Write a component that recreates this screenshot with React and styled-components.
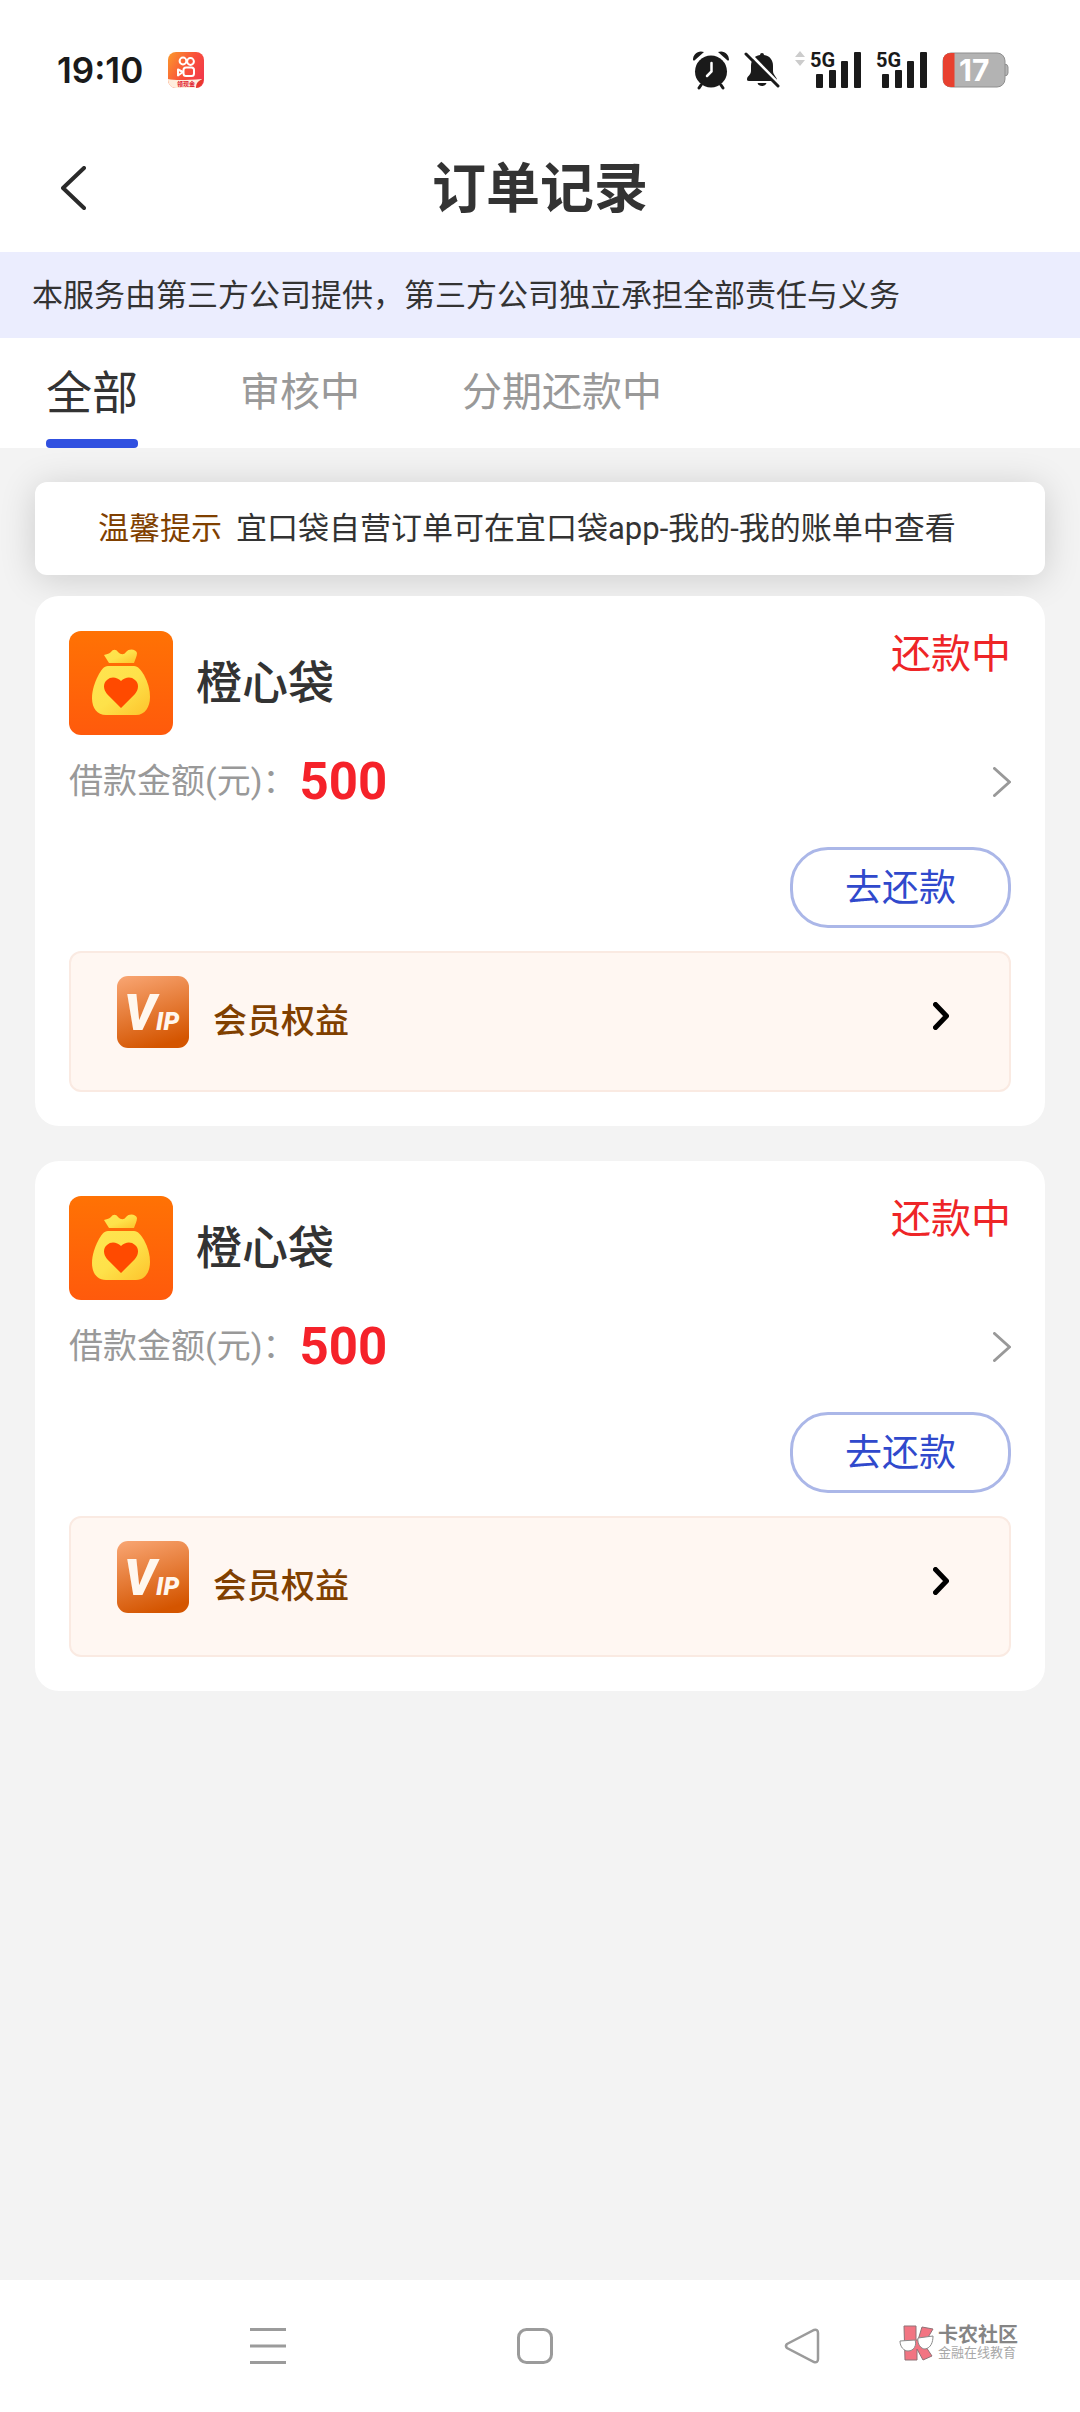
import styled, { createGlobalStyle } from 'styled-components'

const GlobalStyle = createGlobalStyle`
  * {
    box-sizing: border-box;
  }
  body {
    margin: 0;
    background-color: #f3f3f3;
    color: #333333;
    font-family: Roboto, "Noto Sans CJK SC", sans-serif;
  }
  button {
    padding: 0;
    border: none;
    background: none;
    color: inherit;
    font: inherit;
    cursor: pointer;
  }
  svg {
    display: block;
    flex-shrink: 0;
  }
`

const Page = styled.div`
  display: flex;
  flex-direction: column;
  min-height: 100vh;
`

const StatusBar = styled.div`
  display: flex;
  align-items: center;
  justify-content: space-between;
  height: 124px;
  padding: 16px 71px 0 57px;
  background-color: #ffffff;
`

const StatusGroup = styled.div`
  display: flex;
  align-items: center;
  gap: ${({ $gap }) => $gap}px;
`

const Clock = styled.span`
  color: #1a1a1a;
  font-family: Inter, sans-serif;
  font-size: 35px;
  font-weight: 600;
  line-height: 40px;
`

const Header = styled.header`
  display: grid;
  grid-template-columns: 96px 1fr 96px;
  align-items: center;
  height: 128px;
  padding: 0 24px;
  background-color: #ffffff;
`

const BackButton = styled.button`
  display: flex;
  align-items: center;
  height: 96px;
  padding-left: 37px;
`

const Title = styled.h1`
  margin: 0;
  padding-top: 4px;
  font-size: 54px;
  font-weight: bold;
  line-height: 64px;
  text-align: center;
`

const Notice = styled.p`
  margin: 0;
  padding: 2px 32px 0;
  background-color: #ebedfe;
  font-size: 31px;
  line-height: 84px;
`

const Tabs = styled.nav`
  display: flex;
  gap: 102px;
  height: 110px;
  padding: 0 46px;
  background-color: #ffffff;
`

const Tab = styled.button`
  position: relative;
  padding-top: 8px;
  border-bottom: 9px solid transparent;
  color: ${({ $active }) => ($active ? '#333333' : '#999999')};
  font-size: ${({ $active }) => ($active ? 46 : 40)}px;
  line-height: 92px;

  &::after {
    content: "";
    display: ${({ $active }) => ($active ? 'block' : 'none')};
    position: absolute;
    left: 0;
    right: 0;
    bottom: -9px;
    height: 9px;
    border-radius: 4px;
    background-color: #3050e0;
  }
`

const Content = styled.main`
  flex: 1;
  padding: 34px 35px;
`

const Tip = styled.p`
  margin: 0 0 21px;
  padding: 0 63px;
  border-radius: 12px;
  background-color: #ffffff;
  box-shadow: 0 4px 36px rgba(0, 0, 0, 0.16);
  font-size: 31px;
  line-height: 93px;
`

const TipLabel = styled.span`
  margin-right: 14px;
  color: #804000;
`

const Card = styled.article`
  margin-bottom: 35px;
  padding: 35px 34px 34px;
  border-radius: 24px;
  background-color: #ffffff;
`

const CardHead = styled.div`
  display: flex;
  align-items: center;
  gap: 23px;
`

const Name = styled.h2`
  flex: 1;
  margin: 0;
  font-size: 46px;
  font-weight: 500;
  line-height: 56px;
`

const Status = styled.span`
  align-self: flex-start;
  color: #ee2527;
  font-size: 40px;
  line-height: 48px;
`

const AmountRow = styled.a`
  display: flex;
  align-items: center;
  height: 94px;
  color: #999999;
  text-decoration: none;
`

const AmountLabel = styled.span`
  padding-bottom: 3px;
  font-size: 34px;
  line-height: 40px;
`

const Amount = styled.strong`
  flex: 1;
  margin-left: 3px;
  color: #f5222a;
  font-size: 51px;
  line-height: 60px;
`

const Actions = styled.div`
  display: flex;
  justify-content: flex-end;
  margin: 18px 0 23px;
`

const RepayButton = styled.button`
  width: 221px;
  height: 81px;
  padding-bottom: 5px;
  border: 3px solid #abb7e8;
  border-radius: 38px;
  color: #3049cc;
  font-size: 37px;
`

const VipLink = styled.a`
  display: flex;
  align-items: flex-start;
  height: 141px;
  padding: 23px 60px 0 46px;
  border: 2px solid #faeae2;
  border-radius: 12px;
  background-color: #fff7f2;
  color: #804000;
  font-size: 34px;
  font-weight: 500;
  line-height: 90px;
  text-decoration: none;
`

const VipText = styled.span`
  flex: 1;
  margin-left: 24px;
`

const VipArrow = styled.span`
  display: flex;
  align-items: center;
  height: 80px;
`

const NavBar = styled.footer`
  display: grid;
  grid-template-columns: repeat(3, 1fr);
  align-items: center;
  position: relative;
  height: 132px;
  padding: 0 145px 0 134px;
  background-color: #ffffff;
`

const NavButton = styled.button`
  display: flex;
  align-items: center;
  justify-content: center;
  height: 96px;
`

// stamped over the right end of the navigation bar
const Watermark = styled.div`
  display: flex;
  align-items: center;
  gap: 4px;
  position: absolute;
  top: 45px;
  right: 62px;
`

const WatermarkText = styled.div`
  color: #858585;
  font-size: 20px;
  font-weight: bold;
  line-height: 20px;

  small {
    display: block;
    color: #a8a8a8;
    font-size: 13px;
    font-weight: normal;
    line-height: 16px;
  }
`

function KwaiIcon() {
  return (
    <svg width="36" height="36" viewBox="0 0 36 36">
      <defs>
        <linearGradient id="kwai" x1="0" y1="0" x2="1" y2="0.6">
          <stop offset="0" stopColor="#fb9a2c" />
          <stop offset="0.6" stopColor="#f9503a" />
          <stop offset="1" stopColor="#f23a4a" />
        </linearGradient>
      </defs>
      <rect width="36" height="36" rx="8" fill="url(#kwai)" />
      <path d="M0 27q9 2 34 0c-1 5-3 8-6 9H8c-5 0-8-4-8-9z" fill="#ffeede" />
      <g fill="none" stroke="#ffffff" strokeWidth="2">
        <circle cx="15" cy="9" r="3.4" />
        <circle cx="22.5" cy="9.5" r="3.4" />
        <rect x="15.5" y="15.5" width="10.5" height="8.5" rx="2.5" />
        <path d="M15 20l-5 3.500v-6z" strokeLinejoin="round" />
      </g>
      <text x="9" y="34" fontSize="6" fontWeight="bold" fill="#e02030">领现金</text>
      <path d="M28 36c0-4 1-7 7-9 0 4-2 8-7 9z" fill="#e8382c" />
    </svg>
  )
}

function AlarmIcon() {
  return (
    <svg width="38" height="40" viewBox="0 0 38 40">
      <g fill="#1a1a1a">
        <circle cx="19" cy="21.5" r="16" />
        <path d="M1 10C1 4 6 0 12 2L3 10q-1 1-2 0zM37 10c0-6-5-10-11-8l9 8q1 1 2 0z" />
      </g>
      <path d="M9 35l-2 3M29 35l2 3" stroke="#1a1a1a" strokeWidth="3" strokeLinecap="round" />
      <path d="M19.500 13v8.500L15 26" fill="none" stroke="#ffffff" strokeWidth="2.5" strokeLinecap="round" />
    </svg>
  )
}

function MutedIcon() {
  return (
    <svg width="36" height="36" viewBox="0 0 36 36">
      <path d="M18 1q2 0 2 2c6 1 9 5 9 11v5c0 4 4 6 4 9 0 1-1 1-2 1H5c-2 0-2-1-2-2 0-3 4-4 4-8v-5C7 8 10 4 16 3q0-2 2-2z" fill="#1a1a1a" />
      <path d="M13.500 31h9c-1 4-8 4-9 0z" fill="#1a1a1a" />
      <path d="M4 0l34 35" stroke="#ffffff" strokeWidth="3" />
      <path d="M2 2l32 32" stroke="#1a1a1a" strokeWidth="3" strokeLinecap="round" />
    </svg>
  )
}

function SignalIcon() {
  return (
    <svg width="52" height="50" viewBox="0 -6 52 50">
      <text x="0" y="16" fontFamily="'Liberation Sans Narrow', Roboto, sans-serif" fontSize="20" fontWeight="bold" fill="#1a1a1a">5G</text>
      <g fill="#1a1a1a">
        <rect x="6" y="23" width="7" height="14" rx="1" />
        <rect x="19" y="19" width="7" height="18" rx="1" />
        <rect x="31" y="10" width="7" height="27" rx="1" />
        <rect x="44" y="1" width="7" height="36" rx="1" />
      </g>
    </svg>
  )
}

function DataArrows() {
  return (
    <svg width="12" height="38" viewBox="0 0 12 38" fill="#cccccc">
      <path d="M6 0l5 6H1zM6 15l5-6H1z" />
    </svg>
  )
}

function BatteryIcon() {
  return (
    <svg width="67" height="36" viewBox="0 0 67 36">
      <path d="M62 12q4 0 4 3v6q0 3-4 3z" fill="#b3b3b3" stroke="#8f8f8f" />
      <rect x="1" y="1" width="62" height="34" rx="8" fill="#b3b3b3" stroke="#8f8f8f" />
      <path d="M12.500 1v34H9q-8 0-8-8V9q0-8 8-8z" fill="#e8402f" />
      <text x="17" y="29" fontFamily="Inter, sans-serif" fontSize="30" fontWeight="bold" fill="#ffffff">17</text>
    </svg>
  )
}

function BagLogo() {
  return (
    <svg width="104" height="104" viewBox="0 0 104 104">
      <defs>
        <linearGradient id="orange" x1="0" y1="0" x2="0" y2="1">
          <stop offset="0" stopColor="#ff7204" />
          <stop offset="1" stopColor="#ff5a0c" />
        </linearGradient>
        <linearGradient id="yellow" x1="0" y1="0" x2="1" y2="1">
          <stop offset="0" stopColor="#ffe450" />
          <stop offset="0.5" stopColor="#fee24a" />
          <stop offset="1" stopColor="#fdc32c" />
        </linearGradient>
      </defs>
      <rect width="104" height="104" rx="12" fill="url(#orange)" />
      <path d="M40 32l-5-8c2-1 5-1 7-3 2-3 5-3 7 0 3 3 6 3 8 0 3-4 10-3 11 1 0 3-2 7-3 10z" fill="url(#yellow)" />
      <path d="M39 35h26c4 0 7 4 10 9 4 7 6 15 6 22 0 10-5 18-14 18H37c-9 0-14-7-14-17 0-8 3-16 6-22 3-6 6-10 10-10z" fill="url(#yellow)" />
      <path d="M52 77L38 63c-4-5-4-11 0-14 4-4 10-3 14 1 4-4 10-5 14-1 4 3 4 9 0 14z" fill="#ff4a00" />
    </svg>
  )
}

function VipIcon() {
  return (
    <svg width="72" height="72" viewBox="0 0 72 72">
      <defs>
        <linearGradient id="vip" x1="0.2" y1="0" x2="0.5" y2="1">
          <stop offset="0" stopColor="#f7a26e" />
          <stop offset="1" stopColor="#d45500" />
        </linearGradient>
      </defs>
      <rect width="72" height="72" rx="11" fill="url(#vip)" />
      <text x="7" y="54" fill="#fff7ee" fontFamily="Roboto, sans-serif" fontSize="50" fontWeight="900" fontStyle="italic">
        V<tspan fontSize="25">IP</tspan>
      </text>
    </svg>
  )
}

function Chevron({ width, height, color, stroke, left }) {
  const near = stroke / 2
  const far = width - stroke / 2
  const from = left ? far : near
  const to = left ? near : far
  return (
    <svg width={width} height={height} viewBox={`0 0 ${width} ${height}`}>
      <path
        d={`M${from} ${near}L${to} ${height / 2}L${from} ${height - near}`}
        fill="none"
        stroke={color}
        strokeWidth={stroke}
        strokeLinecap="round"
        strokeLinejoin="round"
      />
    </svg>
  )
}

function WatermarkLogo() {
  return (
    <svg width="35" height="36" viewBox="0 0 35 36">
      <path d="M5 1h12v14h2l4-13 11 2-9 15 8 12-9 4-6-11v11H6z" fill="#f27482" stroke="#8f7276" />
      <path d="M1 16l15-1c2 5-1 11-7 11-4 0-8-4-8-10zM19 13l15-2c0 6-2 12-8 13-4 0-8-5-7-11z" fill="#ffffff" stroke="#8a8a8a" />
    </svg>
  )
}

function OrderCard({ name, status, amount }) {
  return (
    <Card>
      <CardHead>
        <BagLogo />
        <Name>{name}</Name>
        <Status>{status}</Status>
      </CardHead>
      <AmountRow href="#detail">
        <AmountLabel>借款金额(元)：</AmountLabel>
        <Amount>{amount}</Amount>
        <Chevron width={18} height={30} color="#999999" stroke={3} />
      </AmountRow>
      <Actions>
        <RepayButton type="button">去还款</RepayButton>
      </Actions>
      <VipLink href="#vip">
        <VipIcon />
        <VipText>会员权益</VipText>
        <VipArrow>
          <Chevron width={16} height={28} color="#000000" stroke={5} />
        </VipArrow>
      </VipLink>
    </Card>
  )
}

const tabs = ['全部', '审核中', '分期还款中']

const orders = [
  { id: 1, name: '橙心袋', status: '还款中', amount: 500 },
  { id: 2, name: '橙心袋', status: '还款中', amount: 500 },
]

function App() {
  return (
    <>
      <GlobalStyle />
      <Page lang="zh-CN">
        <StatusBar>
          <StatusGroup $gap={25}>
            <Clock>19:10</Clock>
            <KwaiIcon />
          </StatusGroup>
          <StatusGroup $gap={14}>
            <AlarmIcon />
            <MutedIcon />
            <StatusGroup $gap={4}>
              <DataArrows />
              <SignalIcon />
            </StatusGroup>
            <SignalIcon />
            <BatteryIcon />
          </StatusGroup>
        </StatusBar>

        <Header>
          <BackButton type="button" aria-label="返回">
            <Chevron width={25} height={44} color="#2a2a2a" stroke={4} left />
          </BackButton>
          <Title>订单记录</Title>
        </Header>

        <Notice>本服务由第三方公司提供，第三方公司独立承担全部责任与义务</Notice>

        <Tabs>
          {tabs.map((tab, i) => (
            <Tab key={tab} type="button" $active={i === 0}>{tab}</Tab>
          ))}
        </Tabs>

        <Content>
          <Tip>
            <TipLabel>温馨提示</TipLabel>
            宜口袋自营订单可在宜口袋app-我的-我的账单中查看
          </Tip>
          {orders.map((order) => (
            <OrderCard key={order.id} name={order.name} status={order.status} amount={order.amount} />
          ))}
        </Content>

        <NavBar>
          <NavButton type="button" aria-label="菜单">
            <svg width="36" height="36" viewBox="0 0 36 36" stroke="#9b9b9b" strokeWidth="3">
              <path d="M0 1.500h36M0 18h36M0 34.500h36" />
            </svg>
          </NavButton>
          <NavButton type="button" aria-label="主页">
            <svg width="36" height="36" viewBox="0 0 36 36" fill="none" stroke="#9b9b9b" strokeWidth="3">
              <rect x="1.5" y="1.5" width="33" height="33" rx="8" />
            </svg>
          </NavButton>
          <NavButton type="button" aria-label="返回">
            <svg width="36" height="36" viewBox="0 0 36 36" fill="none" stroke="#9b9b9b" strokeWidth="2.5">
              <path d="M3 16L30 2q4-1 4 3v26q0 4-4 3L3 20q-2-2 0-4z" />
            </svg>
          </NavButton>
          <Watermark>
            <WatermarkLogo />
            <WatermarkText>
              卡农社区
              <small>金融在线教育</small>
            </WatermarkText>
          </Watermark>
        </NavBar>
      </Page>
    </>
  )
}

export default App
